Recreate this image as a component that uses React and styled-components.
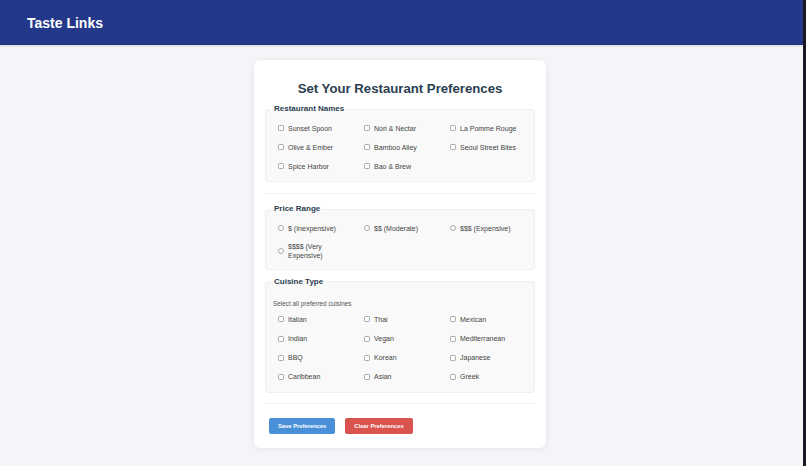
import React from 'react';
import styled, { createGlobalStyle } from 'styled-components';

const GlobalStyle = createGlobalStyle`
  html, body {
    margin: 0;
    padding: 0;
    background: #f4f4f9;
    font-family: "Liberation Sans", Arial, sans-serif;
  }
`;

const Frame = styled.div`
  display: flex;
  min-height: 466px;
`;

const Page = styled.div`
  flex: 1;
  display: flex;
  flex-direction: column;
`;

const Edge = styled.div`
  width: 3px;
  background: #1c1522;
`;

const Header = styled.header`
  height: 45px;
  display: flex;
  align-items: center;
  padding-left: 27px;
  background: #24388a;
  box-shadow: 0 1px 2px rgba(0, 0, 0, 0.12);

  h1 {
    margin: 0;
    font-size: 14px;
    font-weight: 700;
    color: #fff;
  }
`;

const Main = styled.main`
  display: flex;
  justify-content: center;
  padding: 15px 3px 0 0;
`;

const Card = styled.div`
  width: 292px;
  box-sizing: border-box;
  padding: 21px 11px 14px;
  background: #fff;
  border-radius: 6px;
  box-shadow: 0 1px 6px rgba(0, 0, 0, 0.08);
`;

const Title = styled.h2`
  margin: 0 0 8px;
  text-align: center;
  font-size: 13.2px;
  line-height: 15px;
  font-weight: 700;
  color: #2c3e50;
`;

const Fieldset = styled.fieldset`
  margin: 0 0 7px;
  padding: 4.5px 5px 5px;
  border: 1px solid #efefef;
  border-radius: 4px;
  background: #f9f9f9;

  legend {
    padding: 0 3px;
    font-size: 8px;
    line-height: 10px;
    font-weight: 700;
    color: #2c3e50;
  }
`;

const Hint = styled.p`
  margin: 9px 0 1.5px 2px;
  font-size: 6.4px;
  line-height: 8px;
  color: #555;
`;

const OptionGrid = styled.div`
  display: grid;
  grid-template-columns: repeat(3, 86px);
`;

const Option = styled.label`
  display: flex;
  align-items: center;
  gap: 4px;
  min-height: 19.2px;
  box-sizing: border-box;
  padding: 4px 8px 4px 7px;
  font-size: 7px;
  line-height: 9px;
  color: #444;

  input {
    appearance: none;
    flex: none;
    width: 6px;
    height: 6px;
    margin: 0;
    background: #fff;
    border: 0.8px solid #aaa;
    border-radius: ${(p) => (p.$round ? '50%' : '1.2px')};
  }
`;

const Divider = styled.hr`
  margin: ${(p) => p.$space};
  border: none;
  border-top: 1px solid #f0f0f0;
`;

const Actions = styled.div`
  display: flex;
  gap: 10px;
  padding-left: 4px;
`;

const Button = styled.button`
  height: 16px;
  padding: 0 9px;
  border: none;
  border-radius: 2px;
  background: ${(p) => p.$bg};
  color: #fff;
  font-family: inherit;
  font-size: 5.8px;
  font-weight: 700;
`;

const restaurants = [
  'Sunset Spoon', 'Nori & Nectar', 'La Pomme Rouge',
  'Olive & Ember', 'Bamboo Alley', 'Seoul Street Bites',
  'Spice Harbor', 'Bao & Brew',
];

const prices = ['$ (Inexpensive)', '$$ (Moderate)', '$$$ (Expensive)', '$$$$ (Very Expensive)'];

const cuisines = [
  'Italian', 'Thai', 'Mexican',
  'Indian', 'Vegan', 'Mediterranean',
  'BBQ', 'Korean', 'Japanese',
  'Caribbean', 'Asian', 'Greek',
];

const App = () => {
  return (
    <Frame>
      <GlobalStyle />
      <Page>
        <Header>
          <h1>Taste Links</h1>
        </Header>
        <Main>
          <Card>
            <Title>Set Your Restaurant Preferences</Title>

            <Fieldset>
              <legend>Restaurant Names</legend>
              <OptionGrid>
                {restaurants.map((name) => (
                  <Option key={name}>
                    <input type="checkbox" />
                    {name}
                  </Option>
                ))}
              </OptionGrid>
            </Fieldset>

            <Divider $space="11px 0 10px" />

            <Fieldset>
              <legend>Price Range</legend>
              <OptionGrid>
                {prices.map((price) => (
                  <Option key={price} $round>
                    <input type="radio" name="price" />
                    {price}
                  </Option>
                ))}
              </OptionGrid>
            </Fieldset>

            <Fieldset>
              <legend>Cuisine Type</legend>
              <Hint>Select all preferred cuisines</Hint>
              <OptionGrid>
                {cuisines.map((c) => (
                  <Option key={c}>
                    <input type="checkbox" />
                    {c}
                  </Option>
                ))}
              </OptionGrid>
            </Fieldset>

            <Divider $space="10px 0 14px" />

            <Actions>
              <Button $bg="#4a90d9">Save Preferences</Button>
              <Button $bg="#d9534f">Clear Preferences</Button>
            </Actions>
          </Card>
        </Main>
      </Page>
      <Edge />
    </Frame>
  );
};

export default App;
